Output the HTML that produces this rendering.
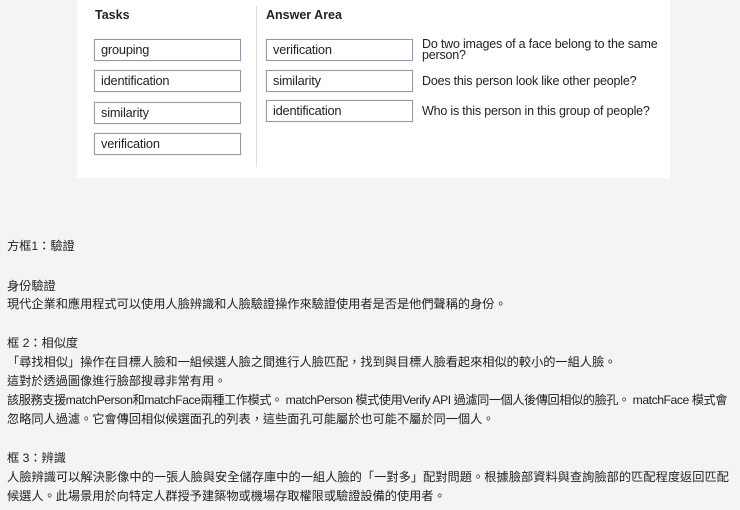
<!DOCTYPE html>
<html><head><meta charset="utf-8"><style>
body{margin:0;width:740px;height:510px;background:#f3f4f6;font-family:"Liberation Sans",sans-serif;position:relative;overflow:hidden}
.img{position:absolute;left:77px;top:0;width:593px;height:178px;background:#fff}
.b{position:absolute;width:144px;height:20px;border:1px solid #8d9cb0;box-shadow:0 0 1px #ccd;font-size:12.8px;line-height:20px;padding-left:6px;box-sizing:content-box;color:#222;letter-spacing:-0.2px}
.h{position:absolute;font-weight:bold;font-size:12.5px;color:#222}
.q{position:absolute;left:422px;font-size:12.5px;color:#222;line-height:11px;letter-spacing:-0.2px}
.t{position:absolute;left:7px;font-family:"Liberation Sans","Noto Sans CJK TC",sans-serif;font-size:12.2px;color:#222;white-space:nowrap;line-height:19px}
</style></head><body>
<div class="img"></div>
<div class="h" style="left:95px;top:8px">Tasks</div>
<div class="h" style="left:266px;top:8px">Answer Area</div>
<div style="position:absolute;left:256px;top:6px;width:1px;height:161px;background:#ddd"></div>
<div class="b" style="left:94px;top:39px;width:139px">grouping</div>
<div class="b" style="left:94px;top:70px;width:139px">identification</div>
<div class="b" style="left:94px;top:102px;width:139px">similarity</div>
<div class="b" style="left:94px;top:133px;width:139px">verification</div>
<div class="b" style="left:266px;top:39px;width:139px">verification</div>
<div class="b" style="left:266px;top:70px;width:139px">similarity</div>
<div class="b" style="left:266px;top:100px;width:139px">identification</div>
<div class="q" style="top:39px">Do two images of a face belong to the same<br>person?</div>
<div class="q" style="top:76px">Does this person look like other people?</div>
<div class="q" style="top:106px">Who is this person in this group of people?</div>
<div class="t" style="top:237px">方框1：驗證</div>
<div class="t" style="top:277px">身份驗證</div>
<div class="t" style="top:295px">現代企業和應用程式可以使用人臉辨識和人臉驗證操作來驗證使用者是否是他們聲稱的身份。</div>
<div class="t" style="top:334px">框 2：相似度</div>
<div class="t" style="top:353px">「尋找相似」操作在目標人臉和一組候選人臉之間進行人臉匹配，找到與目標人臉看起來相似的較小的一組人臉。</div>
<div class="t" style="top:372px">這對於透過圖像進行臉部搜尋非常有用。</div>
<div class="t" style="top:391px;letter-spacing:-0.45px">該服務支援matchPerson和matchFace兩種工作模式。 matchPerson 模式使用Verify API 過濾同一個人後傳回相似的臉孔。 matchFace 模式會</div>
<div class="t" style="top:410px">忽略同人過濾。它會傳回相似候選面孔的列表，這些面孔可能屬於也可能不屬於同一個人。</div>
<div class="t" style="top:449px">框 3：辨識</div>
<div class="t" style="top:468px;letter-spacing:0.05px">人臉辨識可以解決影像中的一張人臉與安全儲存庫中的一組人臉的「一對多」配對問題。根據臉部資料與查詢臉部的匹配程度返回匹配</div>
<div class="t" style="top:487px">候選人。此場景用於向特定人群授予建築物或機場存取權限或驗證設備的使用者。</div>
</body></html>
